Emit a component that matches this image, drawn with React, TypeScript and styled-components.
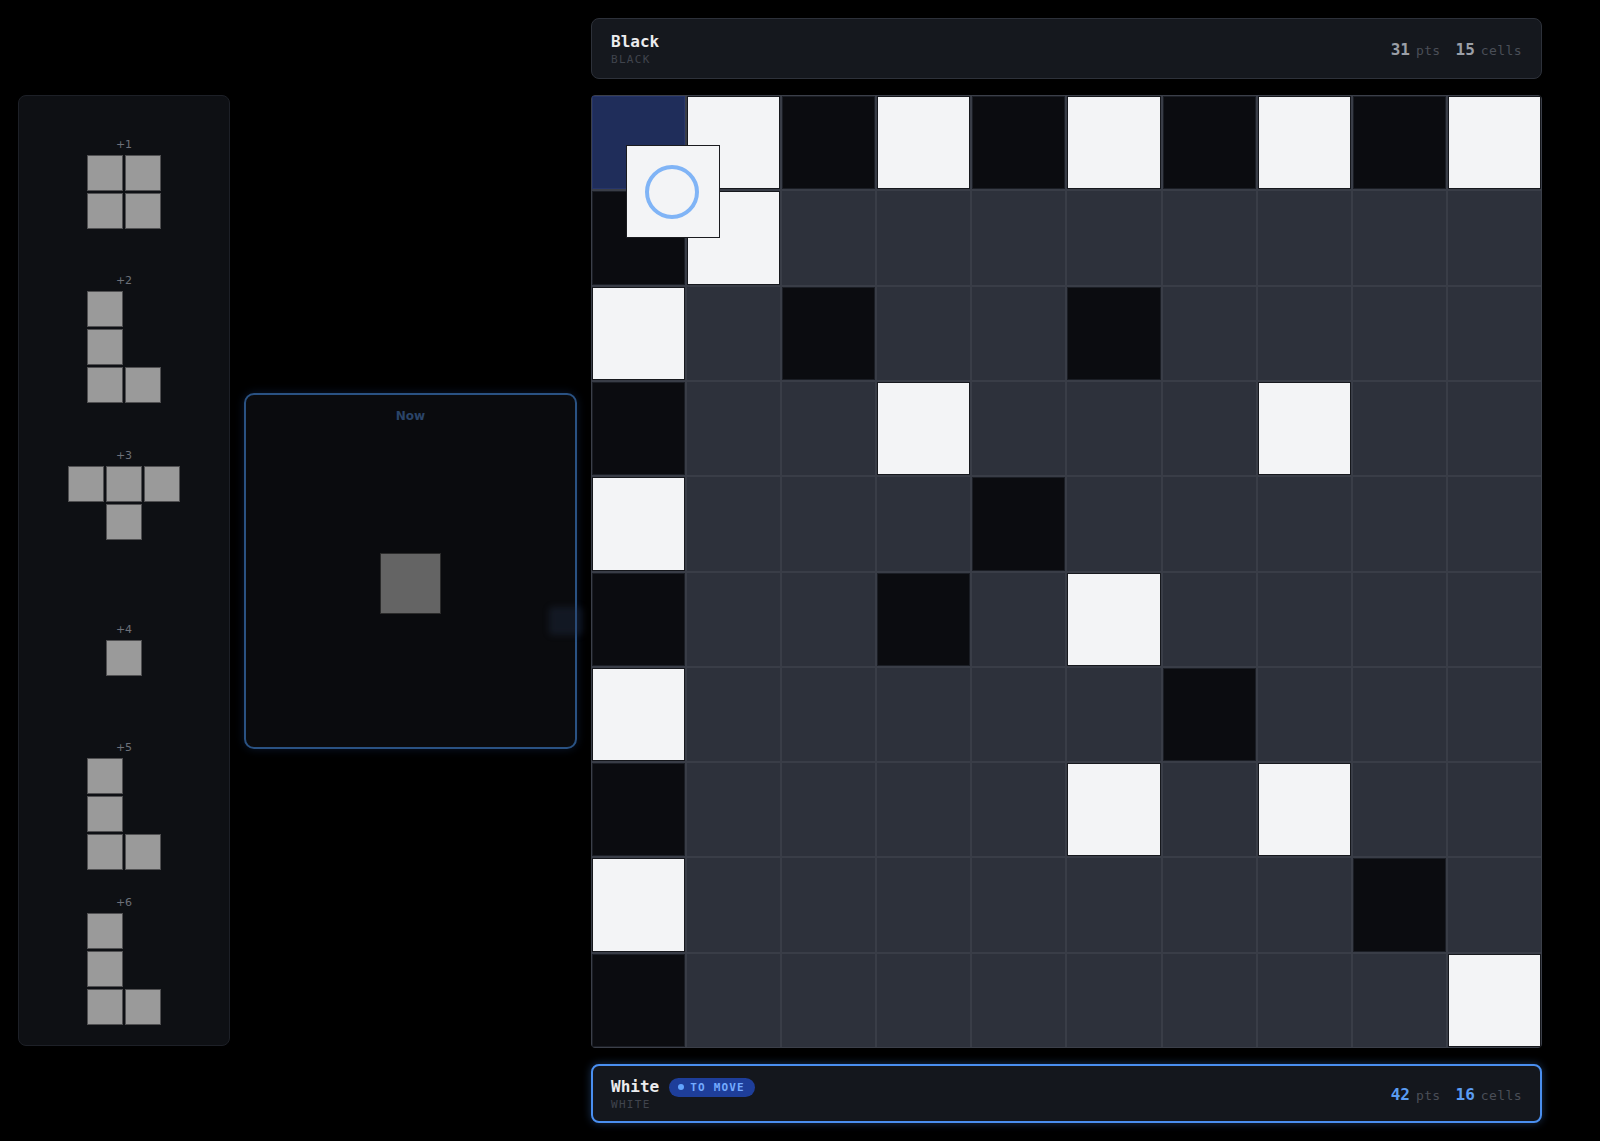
import React from "react";
import styled, { createGlobalStyle } from "styled-components";

const GlobalStyle = createGlobalStyle`
  html, body { margin: 0; padding: 0; background: #000; }
  body { font-family: "DejaVu Sans Mono", "Liberation Mono", monospace; }
  * { box-sizing: border-box; }
`;

const Page = styled.div`
  width: 1600px;
  height: 1141px;
  padding: 18px 0 18px 18px;
  display: flex;
  align-items: center;
  gap: 14px;
  background: #000;
`;

const Tray = styled.div`
  width: 212px;
  height: 951px;
  background: #0e1014;
  border: 1px solid #1d2027;
  border-radius: 8px;
  padding: 10px 0 6px;
  display: grid;
  grid-template-rows: repeat(6, 1fr);
  align-items: center;
  justify-items: center;
`;

const TrayItem = styled.div`
  display: flex;
  flex-direction: column;
  align-items: center;
  gap: 4px;
`;

const PieceLabel = styled.div`
  font-family: "DejaVu Sans", "Noto Sans", sans-serif;
  font-size: 11px;
  line-height: 12px;
  color: #6d7079;
`;

const PieceGrid = styled.div<{ $cols: number; $rows: number }>`
  display: grid;
  grid-template-columns: repeat(${(p) => p.$cols}, 36px);
  grid-template-rows: repeat(${(p) => p.$rows}, 36px);
  gap: 2px;
`;

const PieceCell = styled.div<{ $on: boolean }>`
  background: ${(p) => (p.$on ? "#9a9a9a" : "transparent")};
  box-shadow: ${(p) => (p.$on ? "inset 0 0 0 1px rgba(20,20,24,0.55)" : "none")};
`;

const NowPanel = styled.div`
  width: 333px;
  height: 356px;
  background: #0a0b0e;
  border: 2px solid #2a5283;
  border-radius: 10px;
  box-shadow: 0 0 10px rgba(59, 130, 246, 0.18);
  display: flex;
  flex-direction: column;
  align-items: center;
  padding-top: 14px;
  position: relative;
`;

const NowLabel = styled.div`
  font-family: "DejaVu Sans", "Noto Sans", sans-serif;
  font-size: 12px;
  font-weight: bold;
  color: #2a4468;
`;

const NowStage = styled.div`
  flex: 1;
  display: flex;
  align-items: center;
  justify-content: center;
  padding-bottom: 2px;
`;

const NowCell = styled.div`
  width: 61px;
  height: 61px;
  background: #646464;
  box-shadow: inset 0 0 0 1px #2b2b2b;
`;

const Ghost = styled.div`
  position: absolute;
  right: -8px;
  top: 212px;
  width: 34px;
  height: 28px;
  border-radius: 4px;
  background: rgba(40, 55, 85, 0.3);
  filter: blur(3px);
`;

const Column = styled.div`
  width: 951px;
  display: flex;
  flex-direction: column;
  gap: 16px;
`;

const PlayerBar = styled.div<{ $active: boolean }>`
  height: ${(p) => (p.$active ? 59 : 61)}px;
  display: flex;
  align-items: center;
  justify-content: space-between;
  padding: 1px ${(p) => (p.$active ? 18 : 19)}px 0;
  background: ${(p) => (p.$active ? "#14171d" : "#15181e")};
  border: ${(p) => (p.$active ? "2px solid #4a8ff0" : "1px solid #2d313a")};
  border-radius: 8px;
  box-shadow: ${(p) => (p.$active ? "0 0 8px rgba(74,143,240,0.35)" : "none")};
`;

const NameBlock = styled.div`
  display: flex;
  flex-direction: column;
  gap: 1px;
`;

const NameRow = styled.div`
  display: flex;
  align-items: center;
  gap: 10px;
`;

const Name = styled.div`
  font-size: 16px;
  font-weight: bold;
  color: #ececee;
  line-height: 20px;
`;

const SubName = styled.div`
  font-size: 11px;
  letter-spacing: 1.3px;
  color: #40444d;
  line-height: 13px;
`;

const Badge = styled.div`
  display: flex;
  align-items: center;
  gap: 6px;
  height: 19px;
  padding: 0 10px 0 9px;
  border-radius: 10px;
  background: #1e3e9a;
  color: #74aaff;
  font-size: 11px;
  font-weight: bold;
  letter-spacing: 1.2px;
`;

const Dot = styled.span`
  width: 6px;
  height: 6px;
  border-radius: 50%;
  background: #62a4ff;
`;

const Stats = styled.div`
  display: flex;
  align-items: baseline;
  gap: 15px;
`;

const Stat = styled.div`
  display: flex;
  align-items: baseline;
  gap: 6px;
`;

const StatNum = styled.span<{ $active: boolean }>`
  font-size: 16px;
  font-weight: bold;
  color: ${(p) => (p.$active ? "#5a9cf2" : "#9b9fa7")};
`;

const StatUnit = styled.span`
  font-size: 13px;
  letter-spacing: 0.4px;
  color: #4a4e57;
`;

const Board = styled.div`
  position: relative;
  height: 953px;
  background: #393d47;
  border: 1px solid #3b3f49;
  border-radius: 4px;
  display: grid;
  grid-template-columns: repeat(10, 1fr);
  grid-template-rows: repeat(10, 1fr);
  gap: 2px;
`;

type CellKind = "E" | "W" | "B" | "H";

const cellBg: Record<CellKind, string> = {
  E: "#2d313b",
  W: "#f3f4f6",
  B: "#0b0c10",
  H: "#1f2d5a",
};

const cellEdge: Record<CellKind, string> = {
  E: "transparent",
  W: "#16181d",
  B: "#1b1e25",
  H: "#26356a",
};

const Cell = styled.div<{ $kind: CellKind }>`
  background: ${(p) => cellBg[p.$kind]};
  box-shadow: inset 0 0 0 1px ${(p) => cellEdge[p.$kind]};
`;

const DragPiece = styled.div`
  position: absolute;
  left: 34px;
  top: 49px;
  width: 94px;
  height: 93px;
  background: #f3f4f6;
  border: 1px solid #1a1b1f;
  display: flex;
  align-items: center;
  justify-content: center;
  z-index: 2;
`;

const Ring = styled.div`
  width: 54px;
  height: 54px;
  border-radius: 50%;
  border: 4px solid #80b4f6;
  transform: translate(-1px, 0);
`;

const pieces: { label: string; shape: string[] }[] = [
  { label: "+1", shape: ["XX", "XX"] },
  { label: "+2", shape: ["X.", "X.", "XX"] },
  { label: "+3", shape: ["XXX", ".X."] },
  { label: "+4", shape: ["X"] },
  { label: "+5", shape: ["X.", "X.", "XX"] },
  { label: "+6", shape: ["X.", "X.", "XX"] },
];

const boardRows = [
  "HWBWBWBWBW",
  "BWEEEEEEEE",
  "WEBEEBEEEE",
  "BEEWEEEWEE",
  "WEEEBEEEEE",
  "BEEBEWEEEE",
  "WEEEEEBEEE",
  "BEEEEWEWEE",
  "WEEEEEEEBE",
  "BEEEEEEEEW",
];

export default function App() {
  return (
    <>
      <GlobalStyle />
      <Page>
        <Tray>
          {pieces.map((p) => (
            <TrayItem key={p.label}>
              <PieceLabel>{p.label}</PieceLabel>
              <PieceGrid $cols={p.shape[0].length} $rows={p.shape.length}>
                {p.shape.flatMap((row, r) =>
                  row.split("").map((c, i) => <PieceCell key={`${r}-${i}`} $on={c === "X"} />)
                )}
              </PieceGrid>
            </TrayItem>
          ))}
        </Tray>

        <NowPanel>
          <NowLabel>Now</NowLabel>
          <NowStage>
            <NowCell />
          </NowStage>
          <Ghost />
        </NowPanel>

        <Column>
          <PlayerBar $active={false}>
            <NameBlock>
              <Name>Black</Name>
              <SubName>BLACK</SubName>
            </NameBlock>
            <Stats>
              <Stat>
                <StatNum $active={false}>31</StatNum>
                <StatUnit>pts</StatUnit>
              </Stat>
              <Stat>
                <StatNum $active={false}>15</StatNum>
                <StatUnit>cells</StatUnit>
              </Stat>
            </Stats>
          </PlayerBar>

          <Board>
            {boardRows.flatMap((row, r) =>
              row.split("").map((k, c) => <Cell key={`${r}-${c}`} $kind={k as CellKind} />)
            )}
            <DragPiece>
              <Ring />
            </DragPiece>
          </Board>

          <PlayerBar $active={true}>
            <NameBlock>
              <NameRow>
                <Name>White</Name>
                <Badge>
                  <Dot />
                  TO MOVE
                </Badge>
              </NameRow>
              <SubName>WHITE</SubName>
            </NameBlock>
            <Stats>
              <Stat>
                <StatNum $active={true}>42</StatNum>
                <StatUnit>pts</StatUnit>
              </Stat>
              <Stat>
                <StatNum $active={true}>16</StatNum>
                <StatUnit>cells</StatUnit>
              </Stat>
            </Stats>
          </PlayerBar>
        </Column>
      </Page>
    </>
  );
}
